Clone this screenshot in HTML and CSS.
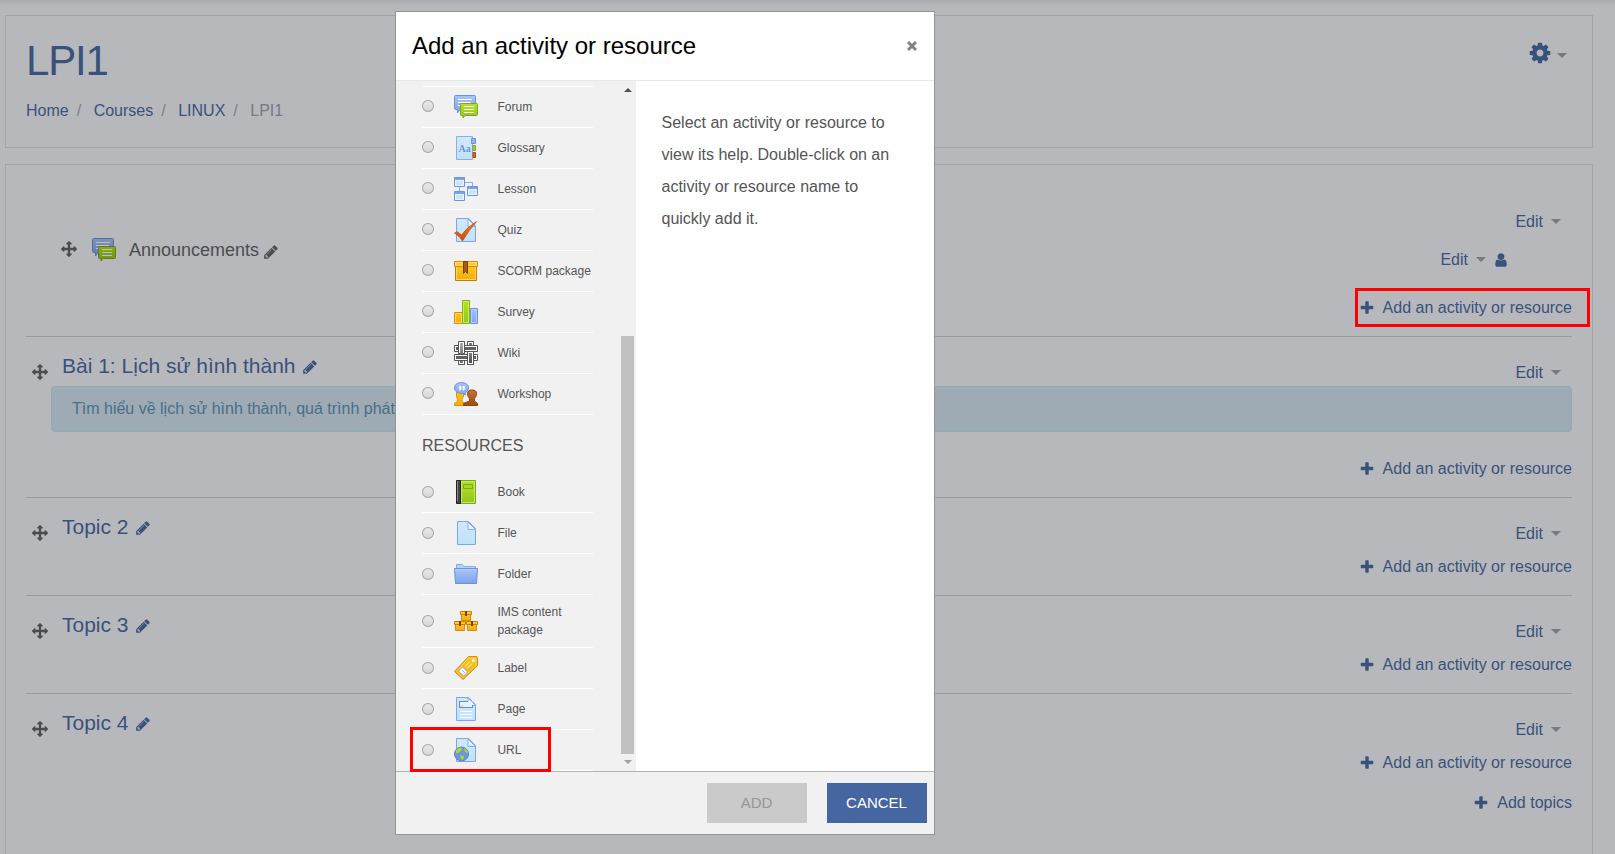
FILE: index.html
```html
<!DOCTYPE html>
<html lang="en">
<head>
<meta charset="utf-8">
<title>LPI1</title>
<link rel="stylesheet" href="styles.css">
</head>
<body>
<svg class="defs" width="0" height="0">
<defs>
<linearGradient id="gBlue" x1="0" y1="0" x2="0" y2="1"><stop offset="0" stop-color="#a9c6f8"/><stop offset="1" stop-color="#7ea2ea"/></linearGradient>
<linearGradient id="gPale" x1="0" y1="0" x2="0" y2="1"><stop offset="0" stop-color="#d3e8fa"/><stop offset="1" stop-color="#bfe3fb"/></linearGradient>
<linearGradient id="gGreen" x1="0" y1="0" x2="0" y2="1"><stop offset="0" stop-color="#b4e61e"/><stop offset="1" stop-color="#93c222"/></linearGradient>
<linearGradient id="gGold" x1="0" y1="0" x2="0" y2="1"><stop offset="0" stop-color="#fbc716"/><stop offset="1" stop-color="#f0ab10"/></linearGradient>
<linearGradient id="gGray" x1="0" y1="0" x2="0" y2="1"><stop offset="0" stop-color="#b0b0b0"/><stop offset="1" stop-color="#4c4c4c"/></linearGradient>
<linearGradient id="gOrange" x1="0" y1="0" x2="0" y2="1"><stop offset="0" stop-color="#f08030"/><stop offset="1" stop-color="#d04a08"/></linearGradient>
<linearGradient id="gBrown" x1="0" y1="0" x2="0" y2="1"><stop offset="0" stop-color="#c8742c"/><stop offset="1" stop-color="#9c4c14"/></linearGradient>
<symbol id="plus" viewBox="0 0 1792 1792"><path d="M1600 736v192q0 40-28 68t-68 28h-416v416q0 40-28 68t-68 28h-192q-40 0-68-28t-28-68v-416h-416q-40 0-68-28t-28-68v-192q0-40 28-68t68-28h416v-416q0-40 28-68t68-28h192q40 0 68 28t28 68v416h416q40 0 68 28t28 68z"/></symbol>
<symbol id="pencil" viewBox="0 0 1792 1792"><path d="M491 1536l91-91-235-235-91 91v107h128v128h107zm523-928q0-22-22-22-10 0-17 7l-542 542q-7 7-7 17 0 22 22 22 10 0 17-7l542-542q7-7 7-17zm-54-192l416 416-832 832h-416v-416zm683 96q0 53-37 90l-166 166-416-416 166-165q36-38 90-38 53 0 91 38l235 234q37 39 37 91z"/></symbol>
<symbol id="cog" viewBox="0 0 1792 1792"><path d="M1152 896q0-106-75-181t-181-75-181 75-75 181 75 181 181 75 181-75 75-181zm512-109v222q0 12-8 23t-20 13l-185 28q-19 54-39 91 35 50 107 138 10 12 10 25t-9 23q-27 37-99 108t-94 71q-12 0-26-9l-138-108q-44 23-91 38-16 136-29 186-7 28-36 28h-222q-14 0-24.500-8.500t-11.500-21.500l-28-184q-49-16-90-37l-141 107q-10 9-25 9-14 0-25-11-126-114-165-168-7-10-7-23 0-12 8-23 15-21 51-66.500t54-70.500q-27-50-41-99l-183-27q-13-2-21-12.500t-8-23.500v-222q0-12 8-23t19-13l186-28q14-46 39-92-40-57-107-138-10-12-10-24 0-10 9-23 26-36 98.500-107.500t94.500-71.500q13 0 26 10l138 107q44-23 91-38 16-136 29-186 7-28 36-28h222q14 0 24.500 8.500t11.500 21.500l28 184q49 16 90 37l142-107q9-9 24-9 13 0 25 10 129 119 165 170 7 8 7 22 0 12-8 23-15 21-51 66.500t-54 70.500q26 50 41 98l183 28q13 2 21 12.500t8 23.500z"/></symbol>
<symbol id="move" viewBox="0 0 1792 1792"><path d="M1792 896q0 26-19 45l-256 256q-19 19-45 19t-45-19-19-45v-128h-384v384h128q26 0 45 19t19 45-19 45l-256 256q-19 19-45 19t-45-19l-256-256q-19-19-19-45t19-45 45-19h128v-384h-384v128q0 26-19 45t-45 19-45-19l-256-256q-19-19-19-45t19-45l256-256q19-19 45-19t45 19 19 45v128h384v-384h-128q-26 0-45-19t-19-45 19-45l256-256q19-19 45-19t45 19l256 256q19 19 19 45t-19 45-45 19h-128v384h384v-128q0-26 19-45t45-19 45 19l256 256q19 19 19 45z"/></symbol>
<symbol id="user" viewBox="0 0 1792 1792"><path d="M1536 1399q0 109-62.500 187t-150.500 78h-854q-88 0-150.500-78t-62.500-187q0-85 8.500-160.500t31.500-152 58.500-131 94-89 134.500-34.500q131 128 313 128t313-128q76 0 134.500 34.500t94 89 58.500 131 31.500 152 8.500 160.500zm-256-887q0 159-112.500 271.500t-271.500 112.500-271.500-112.500-112.500-271.500 112.500-271.500 271.500-112.500 271.500 112.500 112.500 271.500z"/></symbol>
<symbol id="forum" viewBox="0 0 24 24">
<path d="M1.500.5h19q1 0 1 1v12q0 1-1 1H6l-2.500 3.500v-3.500H2q-1.500 0-1.500-1V1.500q0-1 1-1z" fill="url(#gBlue)" stroke="#6d92dc"/>
<path d="M4 4.500h14M4 7.500h13M4 10.500h5" stroke="#fff"/>
<path d="M7.500 8.500h15q1 0 1 1v10q0 1-1 1H11l-2 2.500v-2.500H7.500q-1 0-1-1v-10q0-1 1-1z" fill="url(#gGreen)" stroke="#7ea528"/>
<path d="M10 11.500h10M10 14.500h10M10 17.500h10" stroke="#fff"/></symbol>
<symbol id="glossary" viewBox="0 0 24 24">
<path d="M2.500.5h16v23h-16z" fill="url(#gPale)" stroke="#86aef0"/>
<path d="M17.500 2.500h4v5h-4z" fill="#8fb2f0" stroke="#6d92dc"/><path d="M19 9.500h2.500v5H19z" fill="#a9d92a" stroke="#7ea528"/><path d="M19 16.500h2.500v5H19z" fill="#e8641a" stroke="#b9480c"/>
<text x="4.500" y="16" class="aa">Aa</text></symbol>
<symbol id="lesson" viewBox="0 0 24 24">
<path d="M10.500 5.500h8v4M5.500 9v6" fill="none" stroke="#86aef0"/>
<g fill="#c8e6fb" stroke="#6f94dc"><path d="M.5.5h10v9H.5zM.5 14.500h10v9H.5zM13.500 9.500h10v9h-10z"/></g>
<path d="M1 2h9M1 16h9M14 11h9" stroke="#7ba3ea" stroke-width="2"/>
<path d="M1.500 3.500h8v5h-8zM1.500 17.500h8v5h-8zM14.500 12.500h8v5h-8z" fill="none" stroke="#eaf4fe"/></symbol>
<symbol id="sheet" viewBox="0 0 24 24"><path d="M2.500.5h12l7 7v16h-19z" fill="url(#gPale)" stroke="#7da4ec"/><path d="M14 1v7.500h7.500z" fill="#e8f4fe" stroke="#86aef0"/></symbol>
<symbol id="quiz" viewBox="0 0 24 24"><use href="#sheet" width="24" height="24"/>
<path d="M.5 15l2.500-1.500 4.500 3.500Q13 9 22.500 3.500 15 12 8.500 23q-3-5-8-8z" fill="url(#gOrange)" stroke="#c04a08" stroke-width=".7"/></symbol>
<symbol id="box" viewBox="0 0 24 24">
<path d="M1.500 7.500h21v14h-21z" fill="url(#gGold)" stroke="#c87810"/><path d="M2.500 8v12.500h19V8" fill="none" stroke="#fbd75a"/>
<path d="M.5 2.500h23v5H.5z" fill="#fbc92a" stroke="#d8860c"/><path d="M1.500 3.500h21v3h-21z" fill="none" stroke="#fde27a"/>
<path d="M9.500 2.500h4v12l-2-2-2 2z" fill="#a85a1c" stroke="#7c3c10"/></symbol>
<symbol id="survey" viewBox="0 0 24 24">
<path d="M.5 12.500h8v11h-8z" fill="url(#gGold)" stroke="#dc8a10"/><path d="M1.500 13.500h6v9h-6z" fill="none" stroke="#fcd860"/>
<path d="M16.500 8.500h7v15h-7z" fill="url(#gBlue)" stroke="#6d92dc"/><path d="M17.500 9.500h5v13h-5z" fill="none" stroke="#b4ccf8"/>
<path d="M8.500.5h7v23h-7z" fill="url(#gGreen)" stroke="#82b01c"/><path d="M9.500 1.500h5v21h-5z" fill="none" stroke="#ccf05c"/></symbol>
<symbol id="wiki" viewBox="0 0 24 24">
<g fill="#fff" stroke="#555"><path d="M13.500.5h6v23h-6z"/><path d="M.5 4.500h23v6H.5z"/><path d="M4.500.5h6v12h-6z"/><path d="M4.500 12.500h6v11h-6z"/><path d="M.5 13.500h23v6H.5z"/><path d="M13.500 10.500h6v13h-6z"/></g>
<path d="M16.500 2v2M7.500 20v2" stroke="#777" stroke-width="3"/>
<path d="M2 7.500h2M11 7.500h11M2 16.500h11M20 16.500h2" stroke="#606060" stroke-width="3"/>
<path d="M6 2h3v11H6zM15 12h3v10h-3z" fill="url(#gGray)"/></symbol>
<symbol id="workshop" viewBox="0 0 24 24">
<path d="M.5 23.500v-2l3-2v-2L2.500 14V9h7v5l-1.500 3.500v2l3 2v2z" fill="url(#gGold)" stroke="#dc9210"/>
<path d="M9.500 23.500v-2l6-2.500v-2.500q-2-2-2-5 0-3.500 4.500-3.500t4.500 3.500q0 3-2 5V19l3 2.500v2z" fill="url(#gBrown)" stroke="#8c4210"/>
<path d="M7.500.5q7 .5 7 5.500 0 3-3 4.500v2.500l-3-1.500Q.5 11 .5 6q0-5 7-5.500z" fill="url(#gBlue)" stroke="#6d92dc"/>
<path d="M5 4.500h2v3L5.500 8.500M8.500 4.500h2v3L9 8.500" fill="#fff" stroke="#fff" stroke-width=".8"/></symbol>
<symbol id="book" viewBox="0 0 24 24">
<path d="M6.500.5h15v23h-15z" fill="url(#gGreen)" stroke="#7ea528"/><path d="M7.500 1.500h13v21h-13z" fill="none" stroke="#c4ec50"/>
<path d="M2.500.5h4v23h-4z" fill="#444" stroke="#222"/><path d="M3.500 1v20" stroke="#888"/>
<path d="M9.500 4.500h9v4h-9z" fill="#a4d824" stroke="#7ea528"/></symbol>
<symbol id="file" viewBox="0 0 24 24"><path d="M3.500.5h11l7 7v16h-18z" fill="url(#gPale)" stroke="#7da4ec"/><path d="M14 1v7.500h7.500z" fill="#e8f4fe" stroke="#86aef0"/></symbol>
<symbol id="folder" viewBox="0 0 24 24">
<path d="M2.500 8V2.500h6l1.500 2h11.500V8" fill="#b4cffa" stroke="#86aef0"/><path d="M.5 6.500h23l-1 15h-21z" fill="url(#gBlue)" stroke="#6d92dc"/><path d="M1.500 7.500h21" stroke="#b8d0fa"/></symbol>
<symbol id="ims" viewBox="0 0 24 24">
<g id="crate"><path d="M7.500 5.500h9v6h-9z" fill="url(#gGold)" stroke="#dc8a10"/><path d="M6.500 2.500h11v3h-11z" fill="#fbc92a" stroke="#d07c0c"/><path d="M12 2v5" stroke="#7c4010" stroke-width="2"/></g>
<use href="#crate" x="-6" y="10"/><use href="#crate" x="6" y="10"/></symbol>
<symbol id="label" viewBox="0 0 24 24">
<path d="M14.500.5h8.500l.5 1v8L9 23.500 .5 15.500z" fill="url(#gGold)" stroke="#d88a10" stroke-linejoin="round"/>
<path d="M14.500 2h7.500v7L9 21.500 2.500 15.500z" fill="none" stroke="#fcd860" stroke-width=".8"/>
<circle cx="19.500" cy="4.500" r="1.500" fill="#fff"/><path d="M11 10.500l5-5M13 12.500l5-5" stroke="#fff"/>
<path d="M4.500 15l4-4 5 5-4 4z" fill="#fff" stroke="#86aef0"/><path d="M8 14l3 3" stroke="#8db4f4"/></symbol>
<symbol id="page" viewBox="0 0 24 24"><use href="#sheet" width="24" height="24"/>
<path d="M5.500 4.500h13v6h-13z" fill="#e6f3fd"/><path d="M5 10.500h14M5.500 4.500v6M5 4.500h9M18.500 8v2" fill="none" stroke="#6289d4"/><path d="M6.500 9h3" stroke="#f0b840"/>
<path d="M6 14.500h12M6 17.500h12M6 20.500h12" stroke="#fff"/></symbol>
<symbol id="url" viewBox="0 0 24 24"><use href="#sheet" width="24" height="24"/>
<circle cx="7.500" cy="16" r="7" fill="#6d96dc" stroke="#5c80cc"/>
<path d="M2 12.500q2-3 5-3l1 2-3 3-3 1zM10 10l3 2 1 3-3-1zM6 17l4 1-1 4-2-1z" fill="#a9dc28"/></symbol>
</defs>
</svg>

<div class="page">
<header class="card head">
<div>
<h1>LPI1</h1>
<nav class="crumbs"><a>Home</a><i>/</i><a>Courses</a><i>/</i><a>LINUX</a><i>/</i><span>LPI1</span></nav>
</div>
<div class="gear"><svg width="24" height="24"><use href="#cog"/></svg><b class="caret"></b></div>
</header>

<main class="card course">
<section class="intro">
<div class="forumline"><svg class="mv" width="16" height="16"><use href="#move"/></svg><svg class="dim" width="24" height="24"><use href="#forum"/></svg><span>Announcements</span><svg class="pen" width="16" height="16"><use href="#pencil"/></svg></div>
<div class="actions">
<div class="edit">Edit<b class="caret"></b></div>
<div class="edit sub">Edit<b class="caret"></b><svg width="16" height="16"><use href="#user"/></svg></div>
<div class="add marked"><svg width="16" height="16"><use href="#plus"/></svg>Add an activity or resource</div>
</div>
</section>
<section class="topic">
<div class="bar"><svg class="mv" width="16" height="16"><use href="#move"/></svg><h3>Bài 1: Lịch sử hình thành</h3><svg class="pen" width="16" height="16"><use href="#pencil"/></svg><div class="edit">Edit<b class="caret"></b></div></div>
<div class="note">Tìm hiểu về lịch sử hình thành, quá trình phát</div>
<div class="add"><svg width="16" height="16"><use href="#plus"/></svg>Add an activity or resource</div>
</section>
<section class="topic">
<div class="bar"><svg class="mv" width="16" height="16"><use href="#move"/></svg><h3>Topic 2</h3><svg class="pen" width="16" height="16"><use href="#pencil"/></svg><div class="edit">Edit<b class="caret"></b></div></div>
<div class="add"><svg width="16" height="16"><use href="#plus"/></svg>Add an activity or resource</div>
</section>
<section class="topic">
<div class="bar"><svg class="mv" width="16" height="16"><use href="#move"/></svg><h3>Topic 3</h3><svg class="pen" width="16" height="16"><use href="#pencil"/></svg><div class="edit">Edit<b class="caret"></b></div></div>
<div class="add"><svg width="16" height="16"><use href="#plus"/></svg>Add an activity or resource</div>
</section>
<section class="topic">
<div class="bar"><svg class="mv" width="16" height="16"><use href="#move"/></svg><h3>Topic 4</h3><svg class="pen" width="16" height="16"><use href="#pencil"/></svg><div class="edit">Edit<b class="caret"></b></div></div>
<div class="add"><svg width="16" height="16"><use href="#plus"/></svg>Add an activity or resource</div>
<div class="add topics"><svg width="16" height="16"><use href="#plus"/></svg>Add topics</div>
</section>
</main>
</div>

<div class="modal">
<div class="mhead"><h2>Add an activity or resource</h2><svg class="close" width="12" height="12" viewBox="0 0 12 12"><path d="M2 2l8 8M10 2l-8 8" stroke="#838383" stroke-width="3"/></svg></div>
<div class="mbody">
<div class="list">
<div class="opts first">
<label><i class="radio"></i><svg width="24" height="24"><use href="#forum"/></svg><span>Forum</span></label>
<label><i class="radio"></i><svg width="24" height="24"><use href="#glossary"/></svg><span>Glossary</span></label>
<label><i class="radio"></i><svg width="24" height="24"><use href="#lesson"/></svg><span>Lesson</span></label>
<label><i class="radio"></i><svg width="24" height="24"><use href="#quiz"/></svg><span>Quiz</span></label>
<label><i class="radio"></i><svg width="24" height="24"><use href="#box"/></svg><span>SCORM package</span></label>
<label><i class="radio"></i><svg width="24" height="24"><use href="#survey"/></svg><span>Survey</span></label>
<label><i class="radio"></i><svg width="24" height="24"><use href="#wiki"/></svg><span>Wiki</span></label>
<label><i class="radio"></i><svg width="24" height="24"><use href="#workshop"/></svg><span>Workshop</span></label>
</div>
<h4>RESOURCES</h4>
<div class="opts">
<label><i class="radio"></i><svg width="24" height="24"><use href="#book"/></svg><span>Book</span></label>
<label><i class="radio"></i><svg width="24" height="24"><use href="#file"/></svg><span>File</span></label>
<label><i class="radio"></i><svg width="24" height="24"><use href="#folder"/></svg><span>Folder</span></label>
<label class="tall"><i class="radio"></i><svg width="24" height="24"><use href="#ims"/></svg><span>IMS content package</span></label>
<label><i class="radio"></i><svg width="24" height="24"><use href="#label"/></svg><span>Label</span></label>
<label><i class="radio"></i><svg width="24" height="24"><use href="#page"/></svg><span>Page</span></label>
<label class="marked"><i class="radio"></i><svg width="24" height="24"><use href="#url"/></svg><span>URL</span></label>
</div>
</div>
<div class="scroll"><b class="up"></b><div class="thumb"></div><b class="down"></b></div>
<p class="help">Select an activity or resource to view its help. Double-click on an activity or resource name to quickly add it.</p>
</div>
<div class="mfoot"><button class="off">ADD</button><button>CANCEL</button></div>
</div>
</body>
</html>
```
FILE: styles.css
```css
*, *::after { box-sizing: border-box; }
body { margin: 0; height: 854px; overflow: hidden; position: relative; background: linear-gradient(#a9aaae, #b7b8bb 6px); color: #39527b; font: 16px/24px "Liberation Sans", Arial, sans-serif; }
h1, h2, h3, h4, p { margin: 0; font-weight: 400; }
svg { display: block; flex: none; fill: currentColor; }
.defs { position: absolute; }
.aa { font: bold 10px "Liberation Serif", serif; fill: #6f94d8; }

.page { padding: 15px 22px 0 5px; }
.card { border: 1px solid #a3a4a7; }
.head { height: 133px; padding: 20px 25px 0 20px; display: flex; justify-content: space-between; }
h1 { font-size: 42px; line-height: 50px; letter-spacing: -1.2px; }
.crumbs { display: flex; margin-top: 13px; line-height: 24px; }
.crumbs i { font-style: normal; color: #7a7f86; padding: 0 12.5px 0 8px; }
.crumbs span { color: #757a82; }
.gear { display: flex; align-items: center; gap: 5px; height: 34px; }
.caret { width: 0; height: 0; border: 5px solid transparent; border-top-color: #77797d; border-bottom: 0; }
.gear .caret { margin-top: 4px; }
.edit .caret { margin-bottom: 2px; }

.course { margin-top: 16px; height: 720px; padding: 0 20px; }
.intro { height: 171px; display: flex; justify-content: space-between; }
.forumline { display: flex; align-items: center; height: 26px; margin: 72px 0 0 35px; font-size: 18px; color: #4b4c4f; }
.forumline .mv { margin-bottom: 2px; }
.forumline .dim { margin: 0 13px 0 15px; filter: brightness(.75); }
.forumline .pen { margin: 3px 0 0 4px; }
.actions { display: flex; flex-direction: column; align-items: flex-end; padding-top: 45px; }
.edit { display: flex; align-items: center; gap: 8px; padding-right: 11px; }
.edit.sub { margin-top: 14px; padding-right: 63px; }
.edit.sub svg { margin-left: -1px; }
.mv { color: #4b4c4f; }
.add { display: flex; align-items: center; justify-content: flex-end; gap: 8px; }
.actions .add { margin-top: 24px; position: relative; }
.add svg { margin-bottom: 1px; }
.actions .marked::after { content: ""; position: absolute; inset: -8px -18px -7px -4px; border: 3px solid #f00; }
.topic { border-top: 1px solid #9a9b9f; }
.topic .bar { display: flex; align-items: flex-start; height: 49px; padding-left: 6px; }
.bar .mv { margin-top: 27px; }
.bar h3 { font-size: 21px; line-height: 25px; margin: 16px 6px 0 14px; }
.bar .pen { margin-top: 22px; }
.bar .edit { margin: 24px 0 0 auto; }
.note { margin-left: 25px; height: 46px; padding: 10px 20px; border: 1px solid #8eaab4; border-radius: 4px; background: #9fabb4; color: #467089; }
.topic .add { margin: 8px 0 16px; }
.topic .note + .add { margin: 25px 0 16px; }
.topic .topics { margin-top: 16px; }

.modal { position: absolute; left: 395px; top: 11px; width: 540px; height: 824px; border: 1px solid #949496; background: #fff; color: #555; }
.mhead { display: flex; align-items: center; justify-content: space-between; height: 69px; padding: 0 16px; border-bottom: 1px solid #e5e9ef; }
.mhead h2 { font-size: 24px; line-height: 30px; color: #000; }
.mbody { display: flex; height: 690px; background: linear-gradient(90deg, #f1f1f1 240px, #fff 240px); }
.list { width: 225px; padding: 5px 28px 0 26px; }
.first { border-top: 1px solid #fff; }
.opts label { position: relative; display: flex; align-items: center; height: 41px; border-bottom: 1px solid #fff; font-size: 12px; line-height: 18px; }
.opts .tall { height: 53px; }
.opts span { margin-left: 19.5px; width: 96px; }
.radio { width: 12px; height: 12px; margin: 0 20px 0 0; border: 1px solid #a4a4a4; border-radius: 50%; background: linear-gradient(#e8e8e8, #d8d8d8); }
.first .radio { margin-bottom: 2px; }
.opts .marked::after { content: ""; position: absolute; left: -12px; top: -3px; width: 141px; height: 45px; border: 3px solid #f00; }
h4 { height: 57px; padding-top: 19px; font-size: 16px; }
.scroll { width: 13px; display: flex; flex-direction: column; align-items: center; }
.up { margin: 7px 0 244px; border: 4px solid transparent; border-bottom-color: #505050; border-top: 0; }
.thumb { width: 13px; height: 418px; background: #c1c1c1; }
.down { margin-top: 6px; border: 4px solid transparent; border-top-color: #a0a0a0; border-bottom: 0; }
.help { width: 270px; margin-left: 27.5px; padding: 26px 30px 0 0; line-height: 32px; }
.mfoot { display: flex; justify-content: flex-end; gap: 20px; height: 63px; padding: 11px 7px 0 0; border-top: 1px solid #b3b3b6; background: #f1f1f1; }
button { width: 100px; height: 40px; border: 0; padding: 0 1px 2px 0; background: #4566a1; color: #fff; font: 15px "Liberation Sans", Arial, sans-serif; }
button.off { background: #cacaca; color: #969696; }
```
